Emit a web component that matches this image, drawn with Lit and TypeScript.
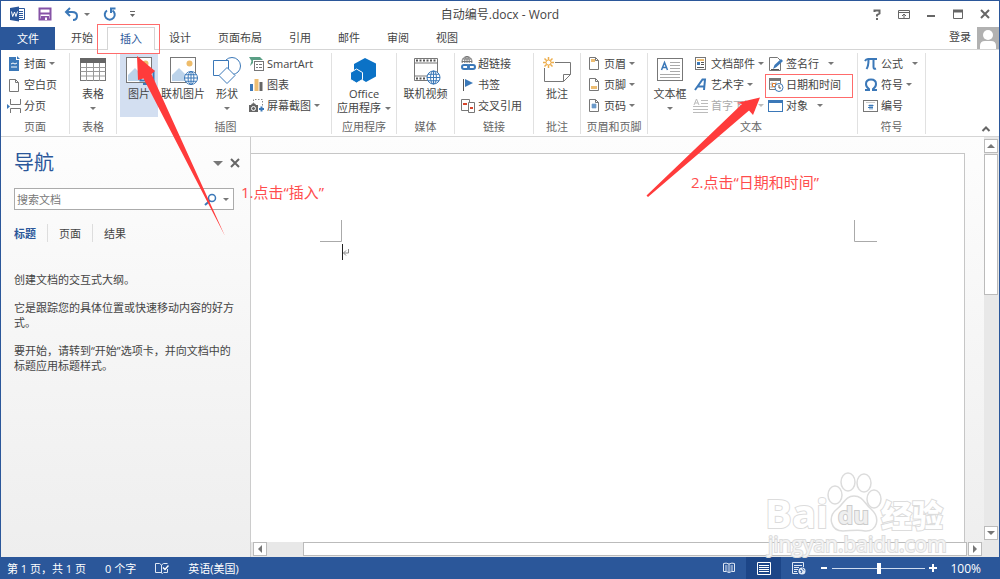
import { LitElement, html, css, svg, nothing, TemplateResult } from "lit";
import { customElement, property } from "lit/decorators.js";

const B = "#3b78b8";
const G = "#777";

const pageOutline = svg`<path d="M3.5 1.5h6l3 3v9h-9z M9.5 1.5v3h3" fill="#fff" stroke="${G}"/>`;
const globe = (cx: number, cy: number, r: number, color = B) => svg`
  <g fill="none" stroke="${color}">
    <circle cx=${cx} cy=${cy} r=${r} fill="#fff"/>
    <ellipse cx=${cx} cy=${cy} rx=${r * 0.45} ry=${r}/>
    <path d="M${cx - r} ${cy}h${2 * r}M${cx - r * 0.85} ${cy - r * 0.5}h${r * 1.7}M${cx - r * 0.85} ${cy + r * 0.5}h${r * 1.7}M${cx} ${cy - r}v${2 * r}"/>
  </g>`;
const photo = svg`
  <rect x="1.5" y=".5" width="25" height="25" fill="#fff" stroke="#777"/>
  <path d="M3 24V18l7-7 9 9v4z" fill="#bcd3ea"/>
  <circle cx="20.500" cy="6.500" r="3" fill="#eebc6a"/>`;

const small: Record<string, TemplateResult> = {
  cover: svg`<path d="M3 1h7v3h3v11H3z" fill="${B}"/><path d="M11 0l3 3h-3z" fill="${B}"/><path d="M5 8l2-1 2 1 2-1M5 11h6" stroke="#fff" fill="none"/>` as any,
  blank: svg`<path d="M3.500 2.500h6l3 3v9h-9z M9.500 2.500v3h3" fill="#fff" stroke="${G}"/>` as any,
  pagebreak: svg`<path d="M4.500 1v5.500h10V1M4.500 15v-4.500h10V15" fill="none" stroke="${G}"/><path d="M1 6l3 2.500L1 11z" fill="${B}"/>` as any,
  smartart: svg`<path d="M0 1h11l3 3H4v3l-3 3 1.500-5z" fill="#5a9f85"/><rect x="5.500" y="5.500" width="9" height="9" fill="#fff" stroke="${G}"/><path d="M7 8.500h2M10 8.500h3M7 11.500h2M10 11.500h3" stroke="${G}"/>` as any,
  chart: svg`<path d="M1 7h3v7H1z" fill="${B}"/><path d="M5.500 2h4v12h-4z" fill="#edbd72"/><path d="M10.500 5h3v9h-3z" fill="#666"/>` as any,
  screenshot: svg`<path d="M4.500 6V1.500h9v7" fill="none" stroke="#888" stroke-dasharray="1.500 1.500"/><path d="M0 7h2l1-1.500h3L7 7h2v7H0z" fill="#666"/><circle cx="4.500" cy="10.500" r="2" fill="#666" stroke="#fff"/><path d="M12.500 8.500v5M10 11h5" stroke="${B}" stroke-width="2"/>` as any,
  hyperlink: svg`${globe(7, 5.5, 5, "#777")}<path d="M1 7h15v8H1z" fill="#fff"/><g fill="none" stroke="${B}" stroke-width="2"><rect x="2" y="9" width="7" height="4" rx="2"/><rect x="8" y="9" width="7" height="4" rx="2"/></g>` as any,
  bookmark: svg`<path d="M3.500 2v12" stroke="#555"/><path d="M5 2l8 4-8 4z" fill="${B}"/>` as any,
  crossref: svg`<path d="M1.500 1.500h8v11h-8z" fill="#fff" stroke="${G}"/><path d="M8.500 4.500h6v10h-6z" fill="#fff" stroke="${G}"/><path d="M3 6h4M10 10h3" stroke="#d8452b" stroke-width="2"/>` as any,
  header: svg`${pageOutline}<path d="M5 3h4v3H5z" fill="#edbd72"/>` as any,
  footer: svg`${pageOutline}<path d="M5 9h6v3H5z" fill="#edbd72"/>` as any,
  pagenum: svg`${pageOutline}<path d="M5.500 7h5M5.500 9h5M7 5.500v5M9 5.500v5" stroke="${B}"/>` as any,
  parts: svg`<rect x="2.500" y="1.500" width="10" height="12" fill="#fff" stroke="${G}"/><path d="M4 4h7" stroke="#edbd72" stroke-width="2"/><path d="M4 6h3v3H4z" fill="${B}"/><path d="M8 6.500h3M8 8.500h3M4 11.500h7" stroke="#555"/>` as any,
  wordart: svg`<path d="M2 13L9.500 2.500H12L11 13M4.500 9.500H11" fill="none" stroke="${B}" stroke-width="2"/>` as any,
  dropcap: svg`<path d="M1 7l2.500-6L6 7M2 5h3M8 2.500h7M8 5.500h7M0 8.500h15M0 11.500h15M0 14.500h15" fill="none" stroke="#bbb"/>` as any,
  signature: svg`<path d="M1.500 1.500h8l3 3v10h-11z" fill="#fff" stroke="${G}"/><path d="M5 13l1.500-4L13 3l2 2-6.500 6z" fill="${B}"/><path d="M3 13.500h8" stroke="#555"/>` as any,
  datetime: svg`<path d="M1.500 2.500h11v10h-11z" fill="#fff" stroke="${G}"/><path d="M1 1h12v3H1z" fill="#777"/><path d="M4 5v6M2 7h7M2 10h7M8 5v3" stroke="#bbb"/><path d="M4.500 6.500h3v3h-3z" fill="#fff" stroke="#e07b28"/><circle cx="11" cy="10.500" r="4" fill="#fff" stroke="${B}"/><path d="M11 8v3h2" fill="none" stroke="#555"/>` as any,
  object: svg`<rect x=".5" y="2.500" width="14" height="11" fill="#fff" stroke="${B}"/><path d="M0 2h15v3H0z" fill="${B}"/>` as any,
  pi: svg`<path d="M2 5q1-2 3-2h9M5.500 4q0 6-2 9M10.500 4v7q0 2.500 2.500 1.500" fill="none" stroke="${B}" stroke-width="2"/>` as any,
  omega: svg`<path d="M2 13h4v-1q-3-2-3-5 0-4.500 5-4.500t5 4.500q0 3-3 5v1h4" fill="none" stroke="${B}" stroke-width="2"/>` as any,
  number: svg`<rect x=".5" y="2.500" width="14" height="11" fill="#fff" stroke="${G}"/><path d="M3 4.500h9" stroke="#ccc"/><path d="M5.500 7.500h5M5 9.500h5M7 6.500v5M9 6.500v5" stroke="${B}"/>` as any,
};

const large: Record<string, TemplateResult> = {
  table: svg`<rect x="1.500" y="1.500" width="25" height="22" fill="#fff" stroke="#777"/><path d="M1 1h26v5H1z" fill="#666"/><path d="M1.500 10.500h25M1.500 14.500h25M1.500 19h25M7.500 6v18M14.500 6v18M20.500 6v18" stroke="#999"/>` as any,
  picture: svg`${photo}<path d="M15.500 14.500h13v9h-13z" fill="#fff" stroke="${B}" stroke-width="2"/><path d="M22 24v3M18 27h8" stroke="${B}" stroke-width="2"/>` as any,
  online: svg`${photo}${globe(22, 21, 6.5)}` as any,
  shapes: svg`<circle cx="19" cy="9" r="8.500" fill="#fff" stroke="${B}"/><path d="M.500 3.500h15v15H.500z" fill="#fff" stroke="${B}"/><path d="M14 10.500l8 8-8 8-8-8z" fill="#fff" stroke="${B}"/>` as any,
  office: svg`<path d="M15 1l11 5.500v13L16 25l-4-2.500v-6L7 13l-3 1V7z" fill="#0b72c6"/><path d="M6.500 12l6 3.500v7L6.500 26l-6-3.500v-7z" fill="#0b72c6" stroke="#fff"/>` as any,
  video: svg`<path d="M2.500 1.500h23v22h-23z" fill="#fff" stroke="#777"/><path d="M4 3.500h20M4 21.500h10" stroke="#555" stroke-width="2" stroke-dasharray="2 1.500"/><path d="M3 6h22M3 19h12" stroke="#777"/>${globe(21.5, 20.5, 6.5)}` as any,
  comment: svg`<path d="M1.500 5.500h26v12l-7 7h-19z" fill="#fff" stroke="#777"/><path d="M20.500 24.500v-7h7" fill="none" stroke="#777"/><path d="M0 0h12v11H0z" fill="#fff"/><path d="M5.500 0v11M0 5.500h11M1.500 1.500l8 8M9.500 1.500l-8 8" stroke="#edae4e" stroke-width="1.500"/><circle cx="5.500" cy="5.500" r="2.500" fill="#fff" stroke="#edae4e"/>` as any,
  textbox: svg`<rect x="1.500" y="1.500" width="25" height="22" fill="#fff" stroke="#777"/><path d="M5.500 13L8.500 5.500 11.500 13M6.500 10.500h4" fill="none" stroke="${B}" stroke-width="1.500"/><path d="M14 5.500h10M14 8.500h10M14 11.500h10M14 14.500h10M4 17.500h20M4 20.500h20" stroke="#aaa"/>` as any,
};

interface Item { icon: string; label: string; caret?: "near" | "far"; off?: boolean }

const base = css`
  :host, button, input { font-family: "Open Sans", "Noto Sans CJK SC", sans-serif; font-size: 11px; }
  button { border: 0; background: none; padding: 0; margin: 0; color: inherit; }
  svg { display: block; flex: none; }
`;

@customElement("tool-button")
export class ToolButton extends LitElement {
  @property({ attribute: false }) item!: Item;
  static styles = [base, css`
    button { display: flex; align-items: center; gap: 2px; height: 21px; line-height: 21px; white-space: nowrap; }
    .off { color: #aaa; }
    .caret { border: 3px solid transparent; border-top-color: #777; border-bottom: 0; margin-left: 1px; }
    .far { margin-left: 7px; }
    .off .caret { border-top-color: #bbb; }
  `];
  render() {
    const { icon, label, caret, off } = this.item;
    return html`<button class=${off ? "off" : ""} ?disabled=${!!off}>
      <svg width="16" height="16" viewBox="0 0 16 16" aria-hidden="true">${small[icon]}</svg>
      <span>${label}</span>${caret ? html`<i class="caret ${caret}"></i>` : nothing}
    </button>`;
  }
}

@customElement("big-button")
export class BigButton extends LitElement {
  @property() icon = "";
  @property() label = "";
  @property() second = "";
  @property({ type: Boolean }) caret = false;
  @property({ type: Boolean }) active = false;
  static styles = [base, css`
    button { display: flex; flex-direction: column; align-items: center; height: 64px; padding-top: 4px; min-width: 38px; line-height: 14px; white-space: nowrap; }
    .label { padding-top: 2px; }
    .active { background: #d3dff1; }
    .more { display: flex; align-items: center; gap: 4px; height: 14px; }
    .caret { border: 3px solid transparent; border-top-color: #777; border-bottom: 0; }
  `];
  render() {
    return html`<button class=${this.active ? "active" : ""}>
      <svg width="28" height="28" viewBox="0 0 28 28" overflow="visible" aria-hidden="true">${large[this.icon]}</svg>
      <span class="label">${this.label}</span>
      ${this.caret ? html`<span class="more">${this.second}<i class="caret"></i></span>` : nothing}
    </button>`;
  }
}

const col = (items: Item[]) => html`<div class="col">${items.map((i) => html`<tool-button .item=${i}></tool-button>`)}</div>`;
const group = (cls: string, name: string, body: unknown) => html`
  <section class="group ${cls}" aria-label=${name}><div class="tools">${body}</div><div class="name">${name}</div></section>`;

@customElement("app-root")
export class AppRoot extends LitElement {
  static styles = [base, css`
    :host { display: block; color: #444; }
    * { box-sizing: border-box; }
    .window { position: relative; display: flex; flex-direction: column; height: 100vh; min-height: 420px; border: 1px solid #2b579a; border-bottom: 0; background: #fff; overflow: hidden; }
    .titlebar { display: grid; grid-template-columns: 1fr auto 1fr; align-items: center; height: 26px; flex: none; }
    .quick { display: flex; align-items: center; gap: 12px; padding-left: 8px; }
    .undo { display: flex; align-items: center; gap: 4px; }
    .title { font-size: 12px; }
    .controls { display: flex; justify-content: flex-end; align-items: center; gap: 11px; padding-right: 6px; }
    .caret { border: 3px solid transparent; border-top-color: #777; border-bottom: 0; }

    .tabs { display: flex; gap: 1px; height: 23px; flex: none; border-bottom: 1px solid #d5d5d5; }
    .tabs button { padding: 0 13px 2px; height: 22px; }
    .tabs .file { background: #2b579a; color: #fff; width: 54px; margin-right: 2px; padding: 0 0 2px; height: 23px; }
    .tabs .current { height: 23px; border: 1px solid #d5d5d5; border-bottom: 0; background: #fff; color: #2b579a; padding: 0 12px 3px; }
    .account { margin-left: auto; display: flex; gap: 6px; line-height: 19px; }
    .ribbon { display: flex; height: 87px; flex: none; padding-top: 3px; border-bottom: 1px solid #d5d5d5; }
    .group { display: flex; flex-direction: column; height: 81px; border-right: 1px solid #e1e1e1; flex: none; }
    .tools { display: flex; height: 64px; }
    .name { text-align: center; line-height: 20px; color: #666; height: 17px; }
    .pages { width: 69px; padding-left: 5px; }
    .pages .name, .links .name, .hf .name, .symbols .name { padding-right: 5px; }
    .text .name { padding-right: 6px; }
    .tables, .comments { width: 47px; }
    .illus { width: 215px; padding-left: 3px; }
    .illus .tools { gap: 3px; }
    .apps { width: 65px; }
    .media { width: 58px; }
    .links { width: 79px; padding-left: 5px; }
    .hf { width: 67px; padding-left: 5px; }
    .text { width: 210px; padding-left: 3px; }
    .text .tools { gap: 4px; }
    .symbols { width: 68px; padding-left: 5px; }
    .centered .tools { justify-content: center; }
    .collapse { margin: auto 8px 3px auto; }

    .body { display: flex; flex: 1; min-height: 0; background: linear-gradient(#fdfdfd, #eee); }
    nav { width: 250px; flex: none; border-right: 1px solid #ccc; padding: 12px 10px 0 13px; }
    .navhead { display: flex; align-items: center; height: 28px; gap: 7px; margin-bottom: 11px; }
    h2 { margin: 0 auto 0 0; font-weight: 400; font-size: 20px; line-height: 28px; color: #2b579a; }
    .navhead .caret { border-width: 5px 5px 0; }
    .search { display: flex; align-items: center; gap: 6px; height: 22px; width: 220px; border: 1px solid #ababab; background: #fff; padding: 0 4px 0 2px; }
    .search input { flex: 1; min-width: 0; border: 0; outline: 0; padding: 0; background: none; }
    .search input::placeholder { color: #777; opacity: 1; }
    .navtabs { display: flex; height: 18px; margin: 14px 0 30px; }
    .navtabs button { padding: 0 11px; border-right: 1px solid #ddd; }
    .navtabs button:first-child { padding-left: 0; color: #2b579a; font-weight: 700; }
    .navtabs button:last-child { border: 0; }
    nav p { margin: 0 0 13px; line-height: 15px; width: 224px; }

    .canvas { flex: 1; min-width: 0; display: flex; flex-direction: column; }
    .page { flex: 1; margin: 16px 19px 0 0; background: #fff; border: 1px solid #c6c6c6; border-width: 1px 1px 0 0; display: flex; justify-content: space-between; align-items: flex-start; padding: 66px 87px 0 69px; }
    .hscroll, .vscroll { display: flex; background: #e8e8e8; flex: none; }
    .hscroll { height: 15px; padding: 0 2px 1px 2px; }
    .vscroll { flex-direction: column; width: 15px; padding: 2px 1px 17px 0; }
    .arrow { display: grid; place-items: center; width: 14px; height: 14px; border: 1px solid #bbb; background: #fff; flex: none; }
    .hthumb { flex: 1; margin: 0 1px 0 36px; border: 1px solid #bbb; background: #fff; }
    .vthumb { height: 141px; margin-top: 1px; border: 1px solid #bbb; background: #fff; }
    .vscroll .arrow:last-child { margin-top: auto; }

    .status { display: flex; align-items: center; height: 22px; flex: none; background: #2b579a; color: #fff; padding: 0 18px 0 6px; }
    .left { display: flex; align-items: center; gap: 19px; }
    .right { display: flex; align-items: center; margin-left: auto; }
    .view { width: 35px; height: 22px; display: grid; place-items: center; }
    .on { background: #1c4587; }
    .zoomer { display: flex; align-items: center; gap: 2px; margin: 0 13px 0 4px; }
    .zoomer input { appearance: none; width: 93px; height: 12px; margin: 0 2px; background: linear-gradient(#cfdcef, #cfdcef) center / 100% 1px no-repeat; }
    .zoomer input::-webkit-slider-thumb { appearance: none; width: 4px; height: 11px; background: #fff; }
    .percent { font-size: 12px; }

    .overlay { position: absolute; left: 0; top: 0; pointer-events: none; }
    .note { position: absolute; color: #ff4d4d; font-size: 15px; line-height: 20px; white-space: nowrap; }
    .one { left: 240px; top: 181px; }
    .two { left: 690px; top: 171px; }
    .mark { position: absolute; right: 52px; bottom: 18px; pointer-events: none; overflow: visible; }
    .mark text { font-family: "Open Sans", "Noto Sans CJK SC", sans-serif; paint-order: stroke; }
  `];

  render() {
    return html`<div class="window">
      <header class="titlebar">
        <div class="quick">
          <svg width="17" height="16" viewBox="0 0 17 16"><path d="M8.500 2.500h7v11h-7z" fill="#fff" stroke="#2b579a"/><path d="M10 5.500h4M10 7.500h4M10 9.500h4M10 11.500h4" stroke="#2b579a"/><path d="M1 2l9-1.500v15L1 14z" fill="#2b579a"/><path d="M2.500 5.500l1.200 5L5.500 6l1.500 4.500 1.500-5" fill="none" stroke="#fff"/></svg>
          <button aria-label="保存"><svg width="14" height="14" viewBox="0 0 14 14"><path d="M1.500 1.500h11v11h-11z" fill="#fff" stroke="#8653a6" stroke-width="2"/><path d="M2 6.500h10" stroke="#8653a6" stroke-width="2"/><path d="M3 9h8v4H3z" fill="#8653a6"/><path d="M7 10.500h2V13H7z" fill="#fff"/></svg></button>
          <span class="undo"><button aria-label="撤消"><svg width="16" height="15" viewBox="0 0 16 15"><path d="M6 1L2 5l4 4M2 5h6q5 0 5 4t-4 4" fill="none" stroke="#3b78b8" stroke-width="2"/></svg></button><i class="caret"></i></span>
          <button aria-label="重复"><svg width="15" height="15" viewBox="0 0 15 15"><path d="M5 3.500A5 5 0 1 0 10.500 3.500M8 1.500h5.500M9 1v5" fill="none" stroke="#3b78b8" stroke-width="2"/></svg></button>
          <svg width="8" height="8" viewBox="0 0 8 8"><path d="M1 1.500h5" stroke="#666"/><path d="M1 4h5L3.500 7z" fill="#666"/></svg>
        </div>
        <div class="title">自动编号.docx - Word</div>
        <div class="controls">
          <button aria-label="帮助"><svg width="16" height="16" viewBox="0 0 16 16"><path d="M5.500 6V4.500h5v3L8 9v1.500M8 12v2" fill="none" stroke="#666" stroke-width="2"/></svg></button>
          <button aria-label="功能区显示选项"><svg width="16" height="16" viewBox="0 0 16 16"><path d="M2.500 4.500h11v8h-11zM2 6.500h12M8 12V8M6 10l2-2 2 2" fill="none" stroke="#666"/></svg></button>
          <button aria-label="最小化"><svg width="16" height="16" viewBox="0 0 16 16"><path d="M4 10h8" stroke="#666" stroke-width="2"/></svg></button>
          <button aria-label="最大化"><svg width="16" height="16" viewBox="0 0 16 16"><path d="M3.500 4.500h9v8h-9z" fill="none" stroke="#666"/><path d="M3 5h10" stroke="#666" stroke-width="3"/></svg></button>
          <button aria-label="关闭"><svg width="16" height="16" viewBox="0 0 16 16"><path d="M4 4l8 8M12 4l-8 8" stroke="#666" stroke-width="2"/></svg></button>
        </div>
      </header>
      <div class="tabs">
        <button class="file">文件</button><button>开始</button><button class="current">插入</button><button>设计</button><button>页面布局</button><button>引用</button><button>邮件</button><button>审阅</button><button>视图</button>
        <div class="account">登录<svg width="22" height="22" viewBox="0 0 22 22"><path d="M0 0h22v22H0z" fill="#b1b1b1"/><circle cx="11" cy="8" r="5" fill="#fff"/><path d="M3 22v-3q0-5 5-5h6q5 0 5 5v3z" fill="#fff"/></svg></div>
      </div>
      <div class="ribbon">
        ${group("pages", "页面", col([{ icon: "cover", label: "封面", caret: "near" }, { icon: "blank", label: "空白页" }, { icon: "pagebreak", label: "分页" }]))}
        ${group("tables centered", "表格", html`<big-button icon="table" label="表格" caret></big-button>`)}
        ${group("illus", "插图", html`
          <big-button icon="picture" label="图片" active></big-button>
          <big-button icon="online" label="联机图片"></big-button>
          <big-button icon="shapes" label="形状" caret></big-button>
          ${col([{ icon: "smartart", label: "SmartArt" }, { icon: "chart", label: "图表" }, { icon: "screenshot", label: "屏幕截图", caret: "near" }])}`)}
        ${group("apps centered", "应用程序", html`<big-button icon="office" label="Office" second="应用程序" caret></big-button>`)}
        ${group("media centered", "媒体", html`<big-button icon="video" label="联机视频"></big-button>`)}
        ${group("links", "链接", col([{ icon: "hyperlink", label: "超链接" }, { icon: "bookmark", label: "书签" }, { icon: "crossref", label: "交叉引用" }]))}
        ${group("comments centered", "批注", html`<big-button icon="comment" label="批注"></big-button>`)}
        ${group("hf", "页眉和页脚", col([{ icon: "header", label: "页眉", caret: "near" }, { icon: "footer", label: "页脚", caret: "near" }, { icon: "pagenum", label: "页码", caret: "near" }]))}
        ${group("text", "文本", html`
          <big-button icon="textbox" label="文本框" caret></big-button>
          ${col([{ icon: "parts", label: "文档部件", caret: "near" }, { icon: "wordart", label: "艺术字", caret: "near" }, { icon: "dropcap", label: "首字下沉", caret: "near", off: true }])}
          ${col([{ icon: "signature", label: "签名行", caret: "far" }, { icon: "datetime", label: "日期和时间" }, { icon: "object", label: "对象", caret: "far" }])}`)}
        ${group("symbols", "符号", col([{ icon: "pi", label: "公式", caret: "far" }, { icon: "omega", label: "符号", caret: "near" }, { icon: "number", label: "编号" }]))}
        <button class="collapse" aria-label="折叠功能区"><svg width="10" height="8" viewBox="0 0 10 8"><path d="M1.500 6L5 2.500 8.500 6" fill="none" stroke="#666" stroke-width="2"/></svg></button>
      </div>
      <div class="body">
        <nav>
          <div class="navhead"><h2>导航</h2><i class="caret"></i><button aria-label="关闭导航"><svg width="10" height="10" viewBox="0 0 10 10"><path d="M1 1l8 8M9 1L1 9" stroke="#666" stroke-width="2"/></svg></button></div>
          <div class="search"><input aria-label="搜索文档" placeholder="搜索文档"><svg width="13" height="13" viewBox="0 0 13 13"><circle cx="8" cy="5" r="3.500" fill="none" stroke="#3b78b8" stroke-width="1.500"/><path d="M5.500 8L1 12" stroke="#3b78b8" stroke-width="2"/></svg><i class="caret"></i></div>
          <div class="navtabs"><button>标题</button><button>页面</button><button>结果</button></div>
          <p>创建文档的交互式大纲。</p>
          <p>它是跟踪您的具体位置或快速移动内容的好方式。</p>
          <p>要开始，请转到“开始”选项卡，并向文档中的标题应用标题样式。</p>
        </nav>
        <div class="canvas">
          <div class="page">
            <svg width="30" height="42" viewBox="0 0 30 42"><path d="M21.500 0v21.500H0" fill="none" stroke="#aaa"/><path d="M22.500 24v16" stroke="#222"/><path d="M28.500 29v4h-5M26 30.500L23.500 33l2.500 2.500" fill="none" stroke="#888"/></svg>
            <svg width="23" height="22" viewBox="0 0 23 22"><path d="M.500 0v21.500H23" fill="none" stroke="#aaa"/></svg>
          </div>
          <div class="hscroll"><button class="arrow" aria-label="向左"><svg width="6" height="8"><path d="M5 0v8L1 4z" fill="#777"/></svg></button><div class="hthumb"></div><button class="arrow" aria-label="向右"><svg width="6" height="8"><path d="M1 0v8l4-4z" fill="#777"/></svg></button></div>
        </div>
        <div class="vscroll"><button class="arrow" aria-label="向上"><svg width="8" height="6"><path d="M0 5h8L4 1z" fill="#777"/></svg></button><div class="vthumb"></div><button class="arrow" aria-label="向下"><svg width="8" height="6"><path d="M0 1h8L4 5z" fill="#777"/></svg></button></div>
      </div>
      <footer class="status">
        <div class="left"><span>第 1 页，共 1 页</span><span>0 个字</span><svg width="14" height="14" viewBox="0 0 14 14"><path d="M6.500 11.500H.500v-9h4l2 1.500v8zM6.500 4l2-1.500h4M12.500 8v3.500h-4M6.500 11.500l1 1.500" fill="none" stroke="#dfe8f5"/><path d="M8 6.500l2 2 3.500-4" fill="none" stroke="#fff" stroke-width="1.500"/></svg><span>英语(美国)</span></div>
        <div class="right">
          <button class="view" aria-label="阅读视图"><svg width="14" height="12" viewBox="0 0 14 12"><path d="M7 2Q4 .500 1.500 1.500v8q3-.500 5.500 1 2.500-1.500 5.500-1v-8Q10 .500 7 2v8.500M3 4h2.500M3 6h2.500M3 8h2.500M8.500 4H11M8.500 6H11M8.500 8H11" fill="none" stroke="#dfe8f5"/></svg></button>
          <button class="view on" aria-label="页面视图"><svg width="14" height="13" viewBox="0 0 14 13"><path d="M.500.500h13v12H.500zM2 3.500h10M2 5.500h10M2 7.500h10M2 9.500h10" fill="none" stroke="#fff"/></svg></button>
          <button class="view" aria-label="Web 版式视图"><svg width="14" height="13" viewBox="0 0 14 13"><path d="M11.500 5V.500H.500v11H6M2 3.500h8M2 5.500h5M2 7.500h4M2 9.500h3" fill="none" stroke="#dfe8f5"/><circle cx="10" cy="9" r="3.500" fill="#dfe8f5"/><path d="M8 8l2 1-1 2M10.500 6.500l1.500 2" fill="none" stroke="#2b579a"/></svg></button>
          <div class="zoomer"><button aria-label="缩小"><svg width="8" height="8"><path d="M1 4h6" stroke="#fff" stroke-width="2"/></svg></button><input type="range" aria-label="显示比例" min="0" max="200" value="100"><button aria-label="放大"><svg width="8" height="8"><path d="M0 4h8M4 0v8" stroke="#fff" stroke-width="2"/></svg></button></div>
          <span class="percent">100%</span>
        </div>
      </footer>

      <svg class="mark" width="180" height="90" viewBox="0 0 180 90" fill="#fff" stroke="#dcdcdc" stroke-width="2">
        <text x="-2" y="57" font-size="40" font-weight="700">Bai</text>
        <text x="114" y="56" font-size="31" font-weight="900">经验</text>
        <g stroke-width="1.500"><ellipse cx="68" cy="24" rx="7" ry="9"/><ellipse cx="81" cy="11" rx="7" ry="9"/><ellipse cx="97" cy="12" rx="7" ry="9"/><ellipse cx="107" cy="28" rx="7" ry="9"/>
        <path d="M87 25c-9 0-10 8-17 13-10 8-6 22 6 22 7 0 15-2 22 0 12 1 16-13 6-22-7-6-8-13-17-13z"/></g>
        <text x="71" y="53" font-size="24" font-weight="700" fill="#efefef" stroke="#ccc">du</text>
        <text x="1" y="81" font-size="21" fill-opacity=".7">jingyan.baidu.com</text>
      </svg>
      <svg class="overlay" width="998" height="300" viewBox="1 1 998 300">
        <g fill="none" stroke="#ff6b6b"><rect x="97.500" y="24.500" width="62" height="29"/><rect x="765.500" y="74.500" width="87" height="23"/></g>
        <path d="M137 56L155 71 151.500 74 225 236 143.500 78.500 138 80z" fill="#ff3b3b"/>
        <path d="M760 97.500L753 115 749 110.500 648 197 646.500 195.500 742 104 736.500 103z" fill="#ff3b3b"/>
      </svg>
      <div class="note one">1.点击“插入”</div>
      <div class="note two">2.点击“日期和时间”</div>
    </div>`;
  }
}
